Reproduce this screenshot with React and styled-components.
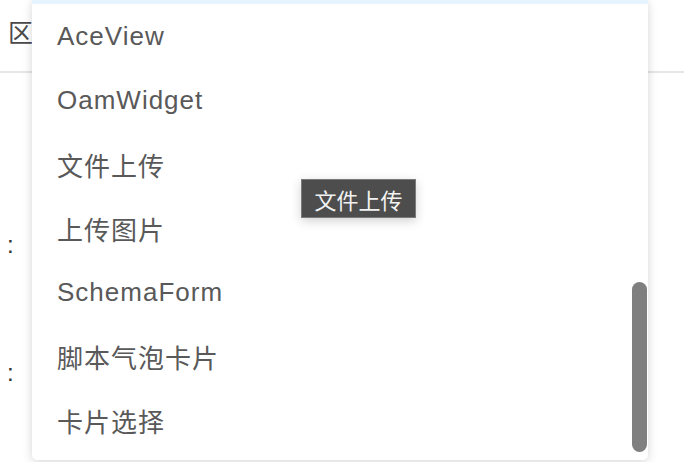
import React from "react";
import styled, { createGlobalStyle } from "styled-components";

const Global = createGlobalStyle`
  html, body { margin: 0; padding: 0; background: #ffffff; overflow: hidden; }
  body { font-family: "Liberation Sans", "Noto Sans CJK SC", sans-serif; }
  #root { width: 684px; height: 462px; }
`;

const Page = styled.div`
  position: relative;
  width: 684px;
  height: 462px;
  background: #ffffff;
  overflow: hidden;
`;

const Header = styled.div`
  height: 73px;
  box-sizing: border-box;
  border-bottom: 2px solid #e6e6e6;
  display: flex;
  align-items: flex-start;
  padding: 13px 0 0 8px;
  font-size: 25px;
  color: #4a4a4a;
  font-family: "Noto Sans CJK SC", sans-serif;
`;

const Form = styled.div`
  display: flex;
  flex-direction: column;
  gap: 104px;
  padding: 160px 0 0 7px;
`;

const Label = styled.div`
  height: 24px;
  font-size: 24px;
  line-height: 24px;
  color: #333;
  font-family: "Liberation Sans", sans-serif;
`;

const Dropdown = styled.div`
  position: absolute;
  left: 32px;
  top: 0;
  width: 616px;
  height: 460px;
  background: #ffffff;
  border-radius: 0 0 5px 5px;
  box-shadow: 0 3px 12px rgba(0, 0, 0, 0.12), 0 0 6px rgba(0, 0, 0, 0.06);
  overflow: hidden;
`;

const List = styled.ul`
  list-style: none;
  margin: -60px 0 0 0;
  padding: 0;
`;

const Item = styled.li`
  height: 64px;
  display: flex;
  align-items: center;
  padding-left: 25px;
  font-size: 26px;
  letter-spacing: 1px;
  color: #595959;
  background: ${(p) => (p.$selected ? "#e6f4ff" : "transparent")};
  font-family: "Liberation Sans", "Noto Sans CJK SC", sans-serif;
`;

const Thumb = styled.div`
  position: absolute;
  right: 1px;
  top: 282px;
  width: 15px;
  height: 170px;
  border-radius: 8px;
  background: #7f7f7f;
`;

const Tooltip = styled.div`
  position: absolute;
  left: 301px;
  top: 179px;
  width: 115px;
  height: 39px;
  box-sizing: border-box;
  display: flex;
  align-items: center;
  justify-content: center;
  background: #4d4d4d;
  border: 1px solid #7a7a7a;
  color: #f2f2f2;
  font-size: 22px;
  font-family: "Noto Sans CJK SC", sans-serif;
  box-shadow: 0 3px 10px rgba(0, 0, 0, 0.18);
`;

const items = [
  { label: "", selected: true },
  { label: "AceView" },
  { label: "OamWidget" },
  { label: "文件上传" },
  { label: "上传图片" },
  { label: "SchemaForm" },
  { label: "脚本气泡卡片" },
  { label: "卡片选择" },
];

export default function App() {
  return (
    <Page>
      <Global />
      <Header>区</Header>
      <Form>
        <Label>:</Label>
        <Label>:</Label>
      </Form>
      <Dropdown>
        <List>
          {items.map((it, i) => (
            <Item key={i} $selected={it.selected}>
              {it.label}
            </Item>
          ))}
        </List>
        <Thumb />
      </Dropdown>
      <Tooltip>文件上传</Tooltip>
    </Page>
  );
}
